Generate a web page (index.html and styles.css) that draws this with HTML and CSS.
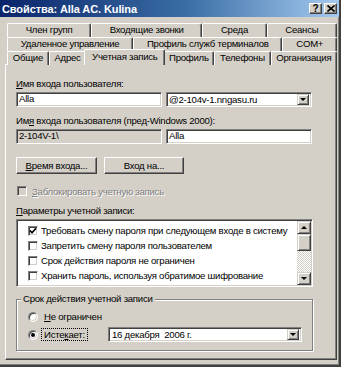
FILE: index.html
```html
<!DOCTYPE html>
<html>
<head>
    <title>Свойства: Alla AC. Kulina</title>
    <link rel="stylesheet" href="styles.css">
</head>
<body>
<div class="window">
    <div class="titlebar">
        <span class="title">Свойства: Alla AC. Kulina</span>
        <div class="caption-buttons">
            <span class="cap-btn">?</span>
            <span class="cap-btn">
                <svg width="8" height="7" viewBox="0 0 8 7"><path d="M0.5 0.5 L7.5 6.5 M7.5 0.5 L0.5 6.5" stroke="#000" stroke-width="1.6" fill="none"/></svg>
            </span>
        </div>
    </div>

    <div class="tabs">
        <div class="tab-row">
            <div class="tab">Член групп</div>
            <div class="tab">Входящие звонки</div>
            <div class="tab">Среда</div>
            <div class="tab">Сеансы</div>
        </div>
        <div class="tab-row">
            <div class="tab">Удаленное управление</div>
            <div class="tab">Профиль служб терминалов</div>
            <div class="tab">COM+</div>
        </div>
        <div class="tab-row tab-row-front">
            <div class="tab">Общие</div>
            <div class="tab">Адрес</div>
            <div class="tab tab-active">Учетная запись</div>
            <div class="tab">Профиль</div>
            <div class="tab">Телефоны</div>
            <div class="tab">Организация</div>
        </div>
    </div>

    <div class="panel">
        <div class="field-label label-first"><u>И</u>мя входа пользователя:</div>
        <div class="field-row">
            <div class="input">Alla</div>
            <div class="input combo">
                <span class="combo-text">@2-104v-1.nngasu.ru</span>
                <span class="drop-btn"><span class="arrow-down"></span></span>
            </div>
        </div>

        <div class="field-label">Им<u>я</u> входа пользователя (пред-Windows 2000):</div>
        <div class="field-row">
            <div class="input input-disabled">2-104V-1\</div>
            <div class="input">Alla</div>
        </div>

        <div class="button-row">
            <div class="button btn-time"><u>В</u>ремя входа...</div>
            <div class="button btn-logon">Вход на...</div>
        </div>

        <div class="check-row disabled">
            <span class="checkbox checkbox-disabled"></span>
            <span><u>З</u>аблокировать учетную запись</span>
        </div>

        <div class="field-label label-options"><u>П</u>араметры учетной записи:</div>
        <div class="listbox">
            <div class="list-items">
                <div class="list-item">
                    <span class="checkbox">
                        <svg width="8" height="8" viewBox="0 0 8 8"><path d="M1 3.5 L3 5.8 L7 1.2" stroke="#000" stroke-width="1.7" fill="none"/></svg>
                    </span>
                    <span>Требовать смену пароля при следующем входе в систему</span>
                </div>
                <div class="list-item">
                    <span class="checkbox"></span>
                    <span>Запретить смену пароля пользователем</span>
                </div>
                <div class="list-item">
                    <span class="checkbox"></span>
                    <span>Срок действия пароля не ограничен</span>
                </div>
                <div class="list-item">
                    <span class="checkbox"></span>
                    <span>Хранить пароль, используя обратимое шифрование</span>
                </div>
            </div>
            <div class="scrollbar">
                <span class="scroll-btn"><span class="arrow-up"></span></span>
                <span class="scroll-thumb"></span>
                <span class="scroll-track"></span>
                <span class="scroll-btn"><span class="arrow-down"></span></span>
            </div>
        </div>

        <fieldset class="groupbox">
            <legend>Срок действия учетной записи</legend>
            <div class="radio-row">
                <span class="radio"></span>
                <span class="radio-label"><u>Н</u>е ограничен</span>
            </div>
            <div class="radio-row">
                <span class="radio"><span class="radio-dot"></span></span>
                <span class="radio-label focused">Исте<u>к</u>ает:</span>
                <div class="input date-combo">
                    <span class="combo-text">16 декабря&nbsp; 2006 г.</span>
                    <span class="drop-btn"><span class="arrow-down"></span></span>
                </div>
            </div>
        </fieldset>
    </div>
</div>
</body>
</html>
```

FILE: styles.css
```css
body { margin: 0; font-family: "Liberation Sans", Arial, sans-serif; font-size: 9.6px; letter-spacing: -0.25px; color: #000; background: #d4d0c8; }
u { text-decoration-thickness: 1px; text-underline-offset: 1px; }

.window { width: 341px; height: 367px; box-sizing: border-box; background: #d4d0c8; border-right: 2px solid #404040; border-bottom: 2px solid #404040; box-shadow: inset -1px -1px 0 #808080; overflow: hidden; }

/* title bar */
.titlebar { height: 17px; display: flex; align-items: center; justify-content: space-between; padding: 0 2px 0 2px; background: linear-gradient(to right, #0a246a 0%, #3a6ea5 55%, #a6caf0 100%); color: #fff; }
.title { font-weight: bold; font-size: 11px; letter-spacing: -0.1px; }
.caption-buttons { display: flex; gap: 2px; }
.cap-btn { width: 13px; height: 11px; box-sizing: border-box; display: flex; align-items: center; justify-content: center; background: #d4d0c8; color: #000; font-weight: bold; font-size: 10px; border-top: 1px solid #fff; border-left: 1px solid #fff; border-right: 1px solid #404040; border-bottom: 1px solid #404040; box-shadow: inset -1px -1px 0 #808080; }

/* tabs */
.tabs { margin-top: 6px; padding: 0 2px 0 7px; }
.tab-row { display: flex; height: 14px; }
.tab-row-front { height: 13px; }
.tab { flex: 1 1 auto; box-sizing: border-box; height: 14px; line-height: 12px; text-align: center; white-space: nowrap; border-top: 1px solid #fff; border-left: 1px solid #fff; border-right: 1px solid #404040; box-shadow: inset -1px 0 0 #808080; border-radius: 2px 2px 0 0; background: #d4d0c8; }
.tab-active { position: relative; z-index: 1; height: 16px; margin: -2px -2px 0 -2px; padding: 0 2px; line-height: 14px; }

/* main panel */
.panel { height: 296px; box-sizing: border-box; margin: 0 2px 0 5px; padding: 13px 0 0 10px; border-top: 1px solid #fff; border-left: 1px solid #fff; border-right: 1px solid #404040; border-bottom: 1px solid #404040; box-shadow: inset -1px -1px 0 #808080; }

.field-label { height: 12px; line-height: 12px; margin-top: 8px; white-space: nowrap; }
.label-first { margin-top: 0; }
.field-row { display: flex; gap: 4px; margin-top: 2px; }

.input { width: 146px; height: 15px; box-sizing: border-box; padding-left: 2px; line-height: 11px; background: #fff; border-top: 1px solid #808080; border-left: 1px solid #808080; border-right: 1px solid #fff; border-bottom: 1px solid #fff; box-shadow: inset 1px 1px 0 #404040, inset -1px -1px 0 #d4d0c8; white-space: nowrap; }
.input-disabled { background: #d4d0c8; }
.combo { display: flex; align-items: center; padding-right: 2px; }
.combo-text { flex: 1; }
.drop-btn { width: 12px; height: 11px; box-sizing: border-box; display: flex; align-items: center; justify-content: center; background: #d4d0c8; border-top: 1px solid #d4d0c8; border-left: 1px solid #d4d0c8; border-right: 1px solid #404040; border-bottom: 1px solid #404040; box-shadow: inset 1px 1px 0 #fff, inset -1px -1px 0 #808080; }
.arrow-down { width: 0; height: 0; border-left: 3px solid transparent; border-right: 3px solid transparent; border-top: 3px solid #000; }
.arrow-up { width: 0; height: 0; border-left: 3px solid transparent; border-right: 3px solid transparent; border-bottom: 3px solid #000; }

.button-row { display: flex; gap: 7px; margin-top: 13px; }
.button { height: 17px; box-sizing: border-box; display: flex; align-items: center; justify-content: center; background: #d4d0c8; border-top: 1px solid #fff; border-left: 1px solid #fff; border-right: 1px solid #404040; border-bottom: 1px solid #404040; box-shadow: inset -1px -1px 0 #808080; }
.btn-time { width: 81px; }
.btn-logon { width: 80px; }

.checkbox { width: 10px; height: 10px; box-sizing: border-box; display: flex; align-items: center; justify-content: center; flex: none; background: #fff; border-top: 1px solid #808080; border-left: 1px solid #808080; border-right: 1px solid #fff; border-bottom: 1px solid #fff; box-shadow: inset 1px 1px 0 #404040, inset -1px -1px 0 #d4d0c8; }
.checkbox-disabled { background: #d4d0c8; }
.check-row { display: flex; align-items: center; gap: 5px; height: 12px; margin-top: 11px; padding-left: 1px; }
.disabled { color: #808080; text-shadow: 1px 1px 0 #fff; }
.label-options { margin-top: 8px; }

.listbox { display: flex; width: 297px; height: 68px; box-sizing: border-box; margin-top: 2px; background: #fff; border-top: 1px solid #808080; border-left: 1px solid #808080; border-right: 1px solid #fff; border-bottom: 1px solid #fff; box-shadow: inset 1px 1px 0 #404040, inset -1px -1px 0 #d4d0c8; padding: 1px; }
.list-items { flex: 1; padding: 2px 0 0 10px; }
.list-item { display: flex; align-items: center; gap: 3px; height: 15px; white-space: nowrap; }
.scrollbar { width: 14px; display: flex; flex-direction: column; }
.scroll-btn, .scroll-thumb { width: 14px; height: 13px; box-sizing: border-box; display: flex; align-items: center; justify-content: center; background: #d4d0c8; border-top: 1px solid #d4d0c8; border-left: 1px solid #d4d0c8; border-right: 1px solid #404040; border-bottom: 1px solid #404040; box-shadow: inset 1px 1px 0 #fff, inset -1px -1px 0 #808080; }
.scroll-thumb { height: 17px; }
.scroll-track { flex: 1; background-color: #d4d0c8; background-image: repeating-conic-gradient(#fff 0 25%, #d4d0c8 0 50%); background-size: 2px 2px; }

.groupbox { width: 297px; height: 58px; box-sizing: border-box; margin: 6px 0 0 0; padding: 0 10px 0 11px; min-inline-size: 0; border: 1px solid #808080; box-shadow: inset 1px 1px 0 #fff, 1px 1px 0 #fff; }
.groupbox legend { margin-left: -7px; padding: 0 2px; height: 12px; line-height: 12px; background: #d4d0c8; }
.radio-row { display: flex; align-items: center; height: 15px; margin-top: 4px; }
.radio-row + .radio-row { margin-top: 3px; }
.radio { width: 10px; height: 10px; box-sizing: border-box; display: flex; align-items: center; justify-content: center; flex: none; margin-right: 3px; border-radius: 50%; background: #fff; border-top: 1px solid #808080; border-left: 1px solid #808080; border-right: 1px solid #fff; border-bottom: 1px solid #fff; box-shadow: inset 1px 1px 0 #404040, inset -1px -1px 0 #d4d0c8; }
.radio-dot { width: 4px; height: 4px; border-radius: 50%; background: #000; }
.radio-label { padding: 0 2px; line-height: 11px; border: 1px solid transparent; }
.focused { border: 1px dotted #000; }
.date-combo { width: 194px; margin-left: auto; display: flex; align-items: center; padding-left: 3px; padding-right: 2px; }
```
